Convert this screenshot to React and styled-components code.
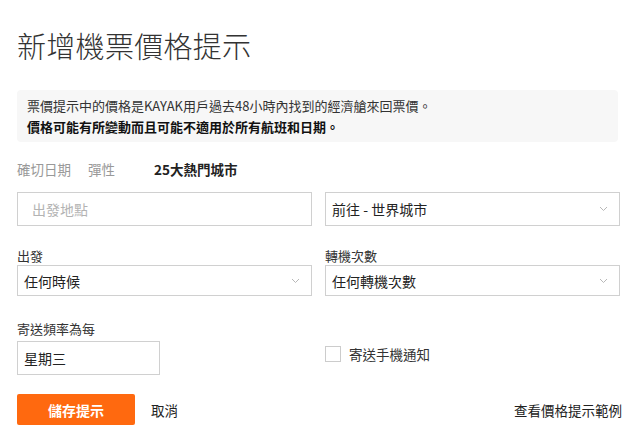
import styled, { createGlobalStyle } from 'styled-components'

const GlobalStyle = createGlobalStyle`
  html, body {
    margin: 0;
    padding: 0;
    background: #fff;
  }
  body {
    font-family: "Noto Sans CJK TC", "Noto Sans", "Liberation Sans", sans-serif;
    color: #333;
  }
  * {
    box-sizing: border-box;
  }
`

const Page = styled.div`
  width: 640px;
  padding: 26px 20px 0 17px;
`

const Title = styled.h1`
  margin: 0;
  font-size: 29px;
  line-height: 38px;
  font-weight: 300;
  color: #333;
  letter-spacing: 0.3px;
`

const Notice = styled.div`
  margin-top: 26px;
  margin-right: 2px;
  background: #f7f7f7;
  border-radius: 4px;
  padding: 5px 10px 5px;
  font-size: 13px;
  line-height: 21px;
  color: #333;
`

const NoticeStrong = styled.div`
  font-weight: 700;
  color: #111;
`

const Tabs = styled.div`
  display: flex;
  align-items: center;
  gap: 17px;
  margin-top: 17px;
  height: 20px;
`

const Tab = styled.span`
  font-size: 13.5px;
  color: ${(p) => (p.$active ? '#222' : '#999')};
  font-weight: ${(p) => (p.$active ? 700 : 400)};
  margin-left: ${(p) => (p.$active ? '22px' : '0')};
`

const Grid = styled.div`
  display: grid;
  grid-template-columns: 1fr 1fr;
  column-gap: 13px;
  margin-top: ${(p) => p.$top || 0}px;
`

const Field = styled.div`
  display: flex;
  flex-direction: column;
`

const Label = styled.label`
  font-size: 13px;
  line-height: 18px;
  color: #333;
  margin-bottom: ${(p) => p.$gap || 0}px;
`

const Box = styled.div`
  display: flex;
  align-items: center;
  justify-content: space-between;
  height: ${(p) => p.$h || 34}px;
  width: ${(p) => (p.$w ? `${p.$w}px` : '100%')};
  border: 1px solid #d0d0d0;
  background: #fff;
  padding: 0 11px 0 ${(p) => (p.$placeholder ? 14 : 6)}px;
  font-size: 14px;
  color: ${(p) => (p.$placeholder ? '#b3b3b3' : '#222')};
`

const Chevron = () => (
  <svg width="9" height="6" viewBox="0 0 9 6">
    <path d="M1 1l3.5 3.5L8 1" fill="none" stroke="#b8b8b8" strokeWidth="1" />
  </svg>
)

const CheckRow = styled.div`
  display: flex;
  align-items: center;
  gap: 8px;
  margin-top: 24px;
  font-size: 13.5px;
  color: #333;
`

const CheckBox = styled.span`
  width: 16px;
  height: 16px;
  border: 1px solid #ccc;
  background: #fff;
`

const Actions = styled.div`
  display: flex;
  align-items: center;
  margin-top: 19px;
`

const SaveButton = styled.button`
  width: 118px;
  height: 31px;
  border: none;
  border-radius: 2px;
  background: #ff690f;
  color: #fff;
  font-family: inherit;
  font-size: 14px;
  font-weight: 700;
`

const TextLink = styled.span`
  font-size: 13.5px;
  color: #222;
  margin-left: ${(p) => (p.$push ? 'auto' : '16px')};
  margin-right: ${(p) => (p.$push ? '-2px' : '0')};
`

export default function App() {
  return (
    <Page>
      <GlobalStyle />
      <Title>新增機票價格提示</Title>
      <Notice>
        <div>票價提示中的價格是KAYAK用戶過去48小時內找到的經濟艙來回票價。</div>
        <NoticeStrong>價格可能有所變動而且可能不適用於所有航班和日期。</NoticeStrong>
      </Notice>
      <Tabs>
        <Tab>確切日期</Tab>
        <Tab>彈性</Tab>
        <Tab $active>25大熱門城市</Tab>
      </Tabs>
      <Grid $top={13}>
        <Box $placeholder>出發地點</Box>
        <Box>
          前往 - 世界城市
          <Chevron />
        </Box>
      </Grid>
      <Grid $top={21}>
        <Field>
          <Label>出發</Label>
          <Box $h={31}>
            任何時候
            <Chevron />
          </Box>
        </Field>
        <Field>
          <Label>轉機次數</Label>
          <Box $h={31}>
            任何轉機次數
            <Chevron />
          </Box>
        </Field>
      </Grid>
      <Grid $top={24}>
        <Field>
          <Label $gap={3}>寄送頻率為每</Label>
          <Box $w={143}>星期三</Box>
        </Field>
        <Field>
          <CheckRow>
            <CheckBox />
            寄送手機通知
          </CheckRow>
        </Field>
      </Grid>
      <Actions>
        <SaveButton>儲存提示</SaveButton>
        <TextLink>取消</TextLink>
        <TextLink $push>查看價格提示範例</TextLink>
      </Actions>
    </Page>
  )
}
